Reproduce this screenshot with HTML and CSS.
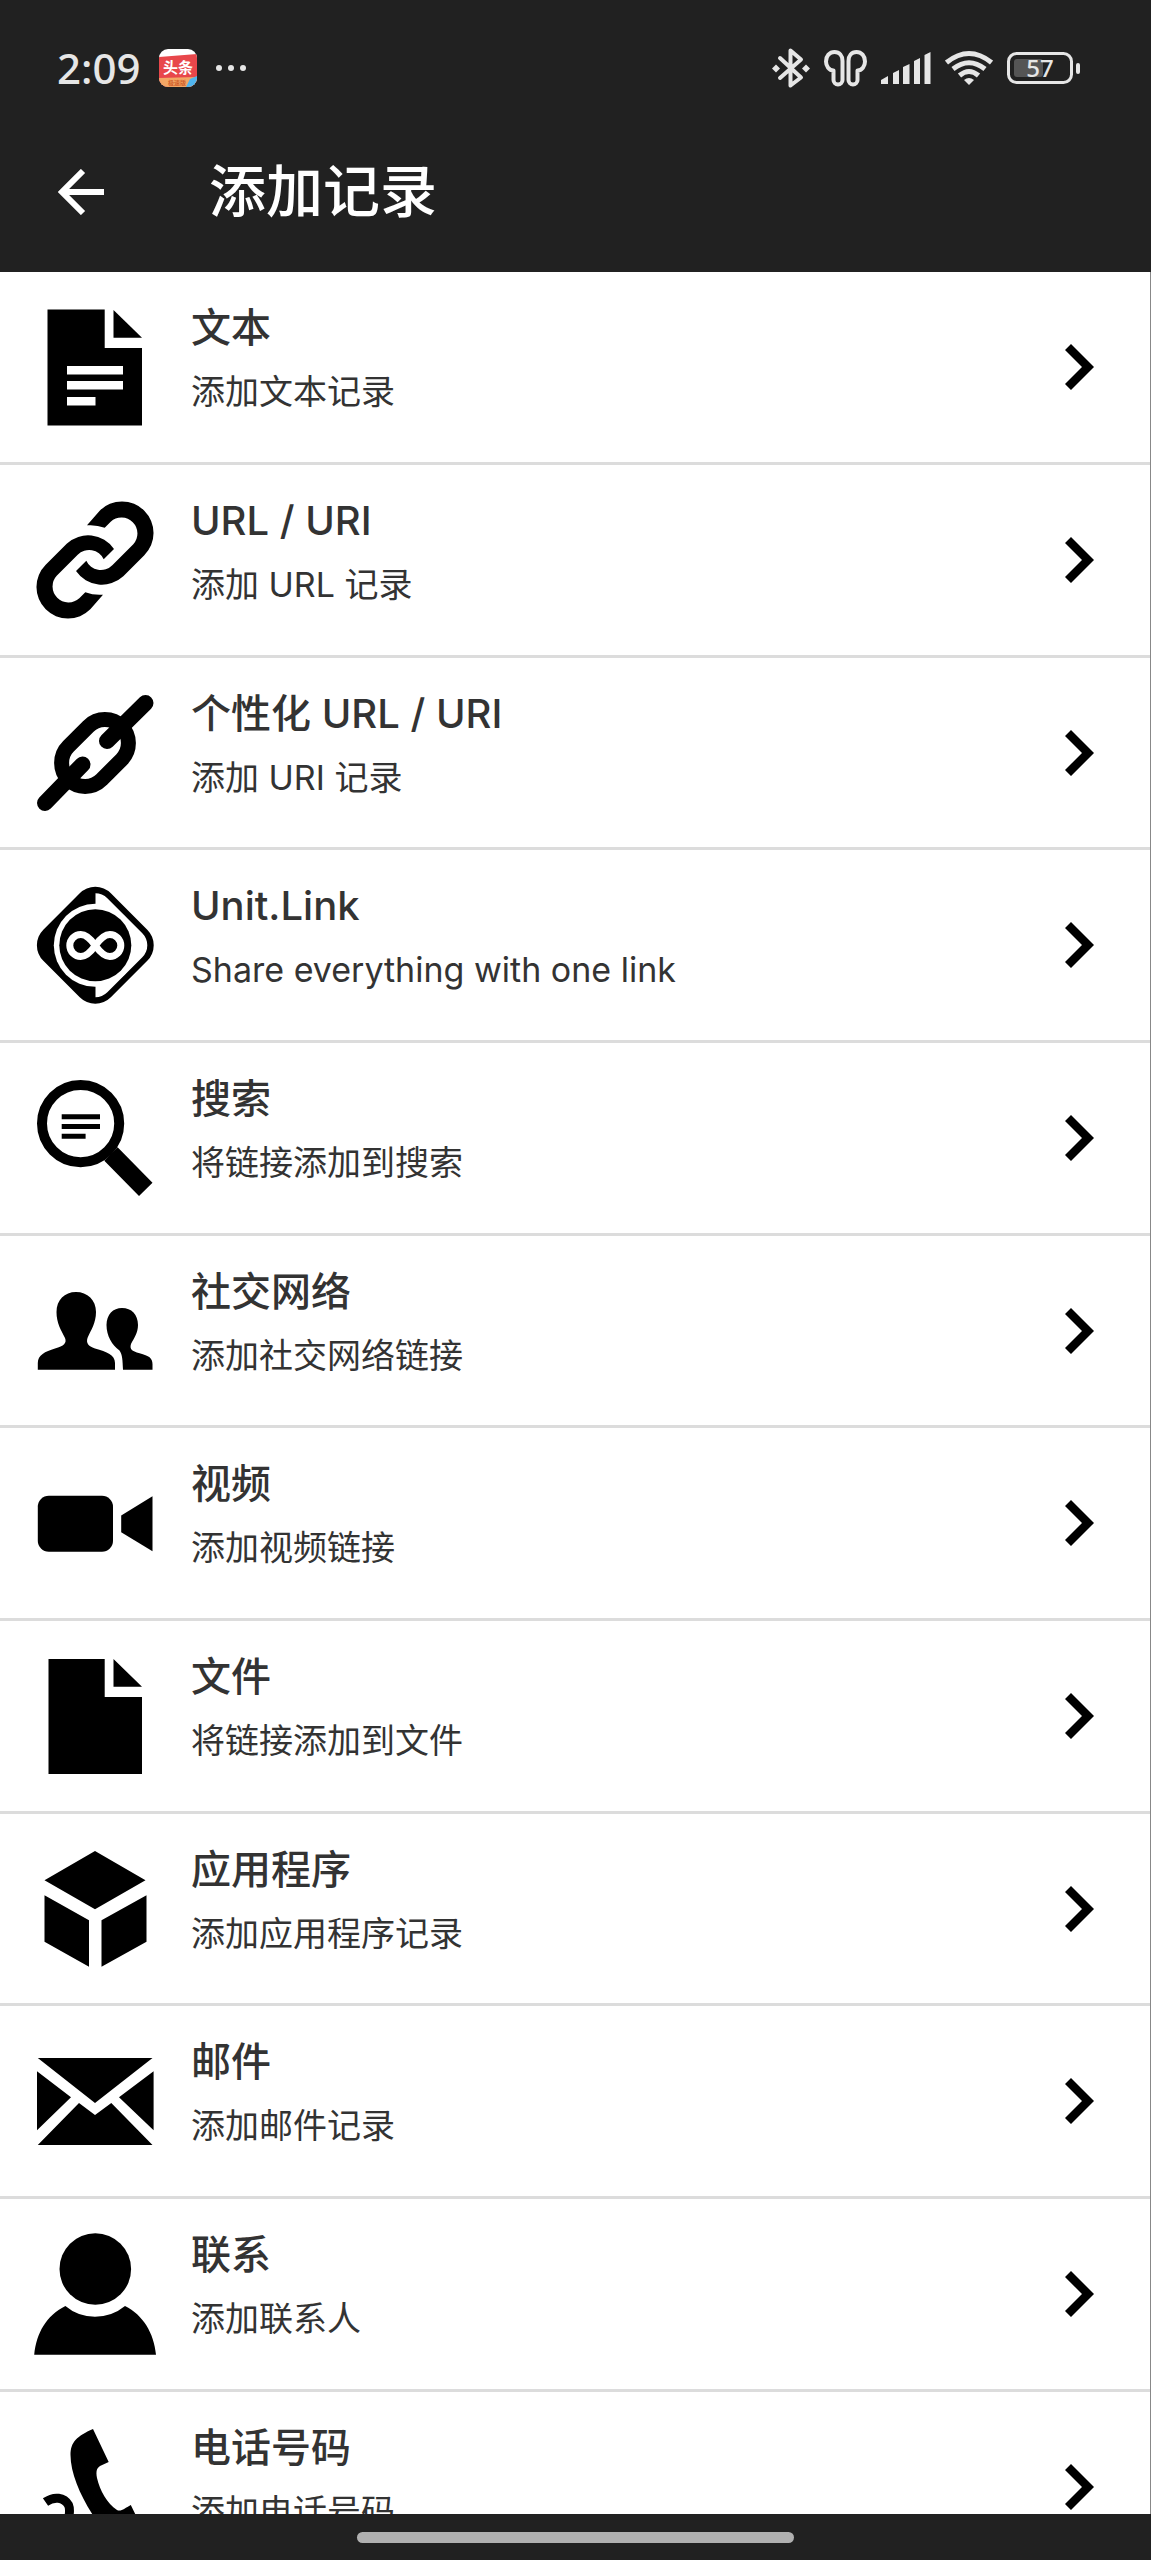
FILE: index.html
```html
<!DOCTYPE html>
<html lang="zh-CN">
<head>
<meta charset="utf-8">
<meta name="viewport" content="width=device-width, initial-scale=1">
<title>添加记录</title>
<link rel="stylesheet" href="styles.css">
</head>
<body>
<div class="screen">
  <header class="top">
    <div class="status">
      <div class="status-left">
        <span class="clock">2:09</span>
        <svg class="app-badge" width="38" height="38" viewBox="0 0 38 38" role="img" aria-label="头条">
          <clipPath id="badge"><rect width="38" height="38" rx="9"/></clipPath>
          <g clip-path="url(#badge)">
            <rect width="38" height="38" fill="#fff"/>
            <path d="M0 8L38 5V38H0Z" fill="#e8474b"/>
            <path d="M0 29L38 28V38H0Z" fill="#f3a765"/>
            <path d="M31 30L38 27V38H27Z" fill="#4fb4ee"/>
            <text class="badge-name" x="19" y="24" text-anchor="middle">头条</text>
            <text class="badge-sub" x="18" y="36" text-anchor="middle">极速版</text>
          </g>
        </svg>
        <svg width="32" height="8" viewBox="0 0 32 8" fill="#e6e6e6" aria-hidden="true">
          <circle cx="4" cy="4" r="3"/><circle cx="16" cy="4" r="3"/><circle cx="28" cy="4" r="3"/>
        </svg>
      </div>
      <div class="status-right">
        <svg width="38" height="42" viewBox="0 0 38 42" aria-label="蓝牙" role="img">
          <path d="M8 11L29 30.500L18.500 38.500V3.500L29 12.500L8 31" fill="none" stroke="#e6e6e6" stroke-width="4" stroke-linejoin="round" stroke-linecap="round"/>
          <path d="M4 17.500L8 21.500L4 25.500L0 21.500ZM34 17.500L38 21.500L34 25.500L30 21.500Z" fill="#e6e6e6"/>
        </svg>
        <svg width="43" height="38" viewBox="0 0 43 38" aria-label="耳机" role="img">
          <g fill="none" stroke="#e6e6e6" stroke-width="4" stroke-linejoin="round">
            <path id="bud" d="M18.500 12V31A4.500 4.500 0 0 1 9.500 31V21.500C5 21.500 2 17 2 12.500C2 7 5.500 3 10.500 3S18.500 7 18.500 12Z"/>
            <path d="M24.500 12V31A4.500 4.500 0 0 0 33.500 31V21.500C38 21.500 41 17 41 12.500C41 7 37.500 3 32.500 3S24.500 7 24.500 12Z"/>
          </g>
        </svg>
        <svg width="50" height="34" viewBox="0 0 50 34" fill="#e6e6e6" aria-label="信号" role="img">
          <path d="M0 33V29L7 25V33ZM12 33V22L18 19V33ZM22 33V16L28.500 13V33ZM33 33V10L39 7V33ZM43.500 33V4L49.500 1V33Z"/>
        </svg>
        <svg width="48" height="36" viewBox="0 0 48 36" aria-label="无线网络" role="img">
          <g fill="none" stroke="#e6e6e6" stroke-width="5">
            <path d="M1.500 12.500Q24 -5.500 46.500 12.500"/>
            <path d="M8 19Q24 6.500 40 19"/>
            <path d="M14.500 25.500Q24 17.500 33.500 25.500"/>
          </g>
          <path d="M19 30Q24 26 29 30L24 35Z" fill="#e6e6e6"/>
        </svg>
        <svg width="74" height="34" viewBox="0 0 74 34" aria-label="电量 57%" role="img">
          <rect x="7" y="8" width="29" height="18" rx="3" fill="#555"/>
          <rect x="1.500" y="2.500" width="63" height="29" rx="8" fill="none" stroke="#e6e6e6" stroke-width="3"/>
          <rect x="69" y="12" width="4" height="11" rx="2" fill="#e6e6e6"/>
          <text class="battery-level" x="33" y="26" text-anchor="middle">57</text>
        </svg>
      </div>
    </div>
    <div class="appbar">
      <button class="back" type="button" aria-label="返回">
        <svg width="46" height="46" viewBox="0 0 46 46" fill="none" stroke="#fff" stroke-width="6" aria-hidden="true"><path d="M46 23H4M25 2L4 23L25 44"/></svg>
      </button>
      <h1 class="heading">添加记录</h1>
    </div>
  </header>

  <main class="content">
    <ul class="records">
      <li class="record"><a class="record-link" href="#text">
        <svg class="icon" viewBox="0 0 124 124" aria-hidden="true"><path fill-rule="evenodd" d="M14.500 4.500H71.700V43H109V120.500H14.500ZM34 61V69.500H90V61ZM34 76V84.500H90V76ZM34 92V100.500H62.500V92Z"/><path d="M80.500 5L109 32.700H80.500Z"/></svg>
        <span class="words"><span class="name">文本</span><span class="hint">添加文本记录</span></span>
        <svg class="chevron" viewBox="0 0 29 46" aria-hidden="true"><path d="M0 6L6 0L29 23L6 46L0 40L17 23Z"/></svg>
      </a></li>
      <li class="record"><a class="record-link" href="#url">
        <svg class="icon" viewBox="0 0 124 124" aria-hidden="true"><path id="half-link" d="M54 27.300L66.700 12.700A31.500 31.500 0 0 1 111.300 57.300L90.300 78.300A31.500 31.500 0 0 1 43 73L53.300 62.700A16 16 0 0 0 79.300 67.300L100.300 46.300A16 16 0 0 0 77.700 23.700L71.700 29.700Q63 26.500 54 27.300Z"/><use href="#half-link" transform="rotate(180 62 62)"/></svg>
        <span class="words"><span class="name">URL / URI</span><span class="hint">添加 URL 记录</span></span>
        <svg class="chevron" viewBox="0 0 29 46" aria-hidden="true"><path d="M0 6L6 0L29 23L6 46L0 40L17 23Z"/></svg>
      </a></li>
      <li class="record"><a class="record-link" href="#uri">
        <svg class="icon" viewBox="0 0 124 124" aria-hidden="true"><g fill="none" stroke="#000"><rect x="24.500" y="38.500" width="75" height="47" rx="23.500" stroke-width="15" transform="rotate(-45 62 62)"/><path d="M112.500 12L74 50M49.500 73.500L12 112" stroke-width="16" stroke-linecap="round"/></g></svg>
        <span class="words"><span class="name">个性化 URL / URI</span><span class="hint">添加 URI 记录</span></span>
        <svg class="chevron" viewBox="0 0 29 46" aria-hidden="true"><path d="M0 6L6 0L29 23L6 46L0 40L17 23Z"/></svg>
      </a></li>
      <li class="record"><a class="record-link" href="#unit-link">
        <svg class="icon" viewBox="0 0 124 124" aria-hidden="true">
          <clipPath id="right-half"><rect x="62.500" width="61.500" height="124"/></clipPath>
          <rect x="14.500" y="14.500" width="95.500" height="95.500" rx="22" transform="rotate(45 62.300 62.300)"/>
          <g clip-path="url(#right-half)"><rect x="20.500" y="20.500" width="83.500" height="83.500" rx="17" fill="#fff" transform="rotate(45 62.300 62.300)"/></g>
          <circle cx="62.300" cy="62.300" r="41.500" fill="#fff"/>
          <circle cx="62.300" cy="62.300" r="36"/>
          <path d="M62.300 62.500C57 55 53 51.500 47.800 51.500A11 11 0 0 0 47.800 73.500C53 73.500 57 70 62.300 62.500C67.600 55 71.600 51.500 76.800 51.500A11 11 0 0 1 76.800 73.500C71.600 73.500 67.600 70 62.300 62.500Z" fill="none" stroke="#fff" stroke-width="7"/>
        </svg>
        <span class="words"><span class="name">Unit.Link</span><span class="hint">Share everything with one link</span></span>
        <svg class="chevron" viewBox="0 0 29 46" aria-hidden="true"><path d="M0 6L6 0L29 23L6 46L0 40L17 23Z"/></svg>
      </a></li>
      <li class="record"><a class="record-link" href="#search">
        <svg class="icon" viewBox="0 0 124 124" aria-hidden="true"><circle cx="47.600" cy="47.600" r="38.600" fill="none" stroke="#000" stroke-width="10"/><path d="M71.300 84.700L84.600 71.300L119.500 106.700L106 120ZM28.700 38.300H67V43.300H28.700ZM28.700 48H67V53H28.700ZM28.700 57.700H52.600V62.700H28.700Z"/></svg>
        <span class="words"><span class="name">搜索</span><span class="hint">将链接添加到搜索</span></span>
        <svg class="chevron" viewBox="0 0 29 46" aria-hidden="true"><path d="M0 6L6 0L29 23L6 46L0 40L17 23Z"/></svg>
      </a></li>
      <li class="record"><a class="record-link" href="#social">
        <svg class="icon" viewBox="0 0 124 124" aria-hidden="true"><path d="M43 23C54.500 23 63 31 63 43C63 54 58 61 54.500 69C53 74 55 77 62 79.500C74 83 82 86 82 94V100.700H4.800V94C4.800 86 12 82.500 22 79.500C31 77 34 74 32 69C28 61 23.500 54 23.500 43C23.500 31 31.500 23 43 23Z"/><path d="M89 39C98.500 39 105 45.500 105 56C105 64 101 69 98 75C96.500 80 98.500 82 106.600 84.300C116 87 119.500 89 119.500 95V100.700H90C89.500 91 89.500 86 86.500 81.500C79 76 73.500 67 73.500 56C73.500 45.500 80 39 89 39Z"/></svg>
        <span class="words"><span class="name">社交网络</span><span class="hint">添加社交网络链接</span></span>
        <svg class="chevron" viewBox="0 0 29 46" aria-hidden="true"><path d="M0 6L6 0L29 23L6 46L0 40L17 23Z"/></svg>
      </a></li>
      <li class="record"><a class="record-link" href="#video">
        <svg class="icon" viewBox="0 0 124 124" aria-hidden="true"><rect x="4.800" y="34.700" width="75.200" height="56" rx="11"/><path d="M88.200 54.500L119.500 35.300V90.300L88.200 71.300Z"/></svg>
        <span class="words"><span class="name">视频</span><span class="hint">添加视频链接</span></span>
        <svg class="chevron" viewBox="0 0 29 46" aria-hidden="true"><path d="M0 6L6 0L29 23L6 46L0 40L17 23Z"/></svg>
      </a></li>
      <li class="record"><a class="record-link" href="#file">
        <svg class="icon" viewBox="0 0 124 124" aria-hidden="true"><path d="M15.500 5H71.700V43H109V120H15.500ZM80.500 5L109 32.700H80.500Z"/></svg>
        <span class="words"><span class="name">文件</span><span class="hint">将链接添加到文件</span></span>
        <svg class="chevron" viewBox="0 0 29 46" aria-hidden="true"><path d="M0 6L6 0L29 23L6 46L0 40L17 23Z"/></svg>
      </a></li>
      <li class="record"><a class="record-link" href="#app">
        <svg class="icon" viewBox="0 0 124 124" aria-hidden="true"><path d="M62 4L112.500 33.300L62 62.300L11.500 33.300ZM11.500 48.300L56 73.300V119.700L11.500 94.700ZM113.500 48.300L68.500 73.300V119.700L113.500 94.700Z"/></svg>
        <span class="words"><span class="name">应用程序</span><span class="hint">添加应用程序记录</span></span>
        <svg class="chevron" viewBox="0 0 29 46" aria-hidden="true"><path d="M0 6L6 0L29 23L6 46L0 40L17 23Z"/></svg>
      </a></li>
      <li class="record"><a class="record-link" href="#mail">
        <svg class="icon" viewBox="0 0 124 124" aria-hidden="true"><path d="M4.800 19H119.500L62 64ZM4 32.300L38 58.300L4 91.300ZM120.600 32.300L86 58.300L120.600 91.300ZM4.800 106L46 64L62 76L78.300 64L119.500 106Z"/></svg>
        <span class="words"><span class="name">邮件</span><span class="hint">添加邮件记录</span></span>
        <svg class="chevron" viewBox="0 0 29 46" aria-hidden="true"><path d="M0 6L6 0L29 23L6 46L0 40L17 23Z"/></svg>
      </a></li>
      <li class="record"><a class="record-link" href="#contact">
        <svg class="icon" viewBox="0 0 124 124" aria-hidden="true"><circle cx="62.300" cy="37" r="35.800"/><path d="M1.200 122.700C3.500 101 13 84 32.400 74Q45 84.700 62 84.700T92 74C110 83 121 101 123 122.700Z"/></svg>
        <span class="words"><span class="name">联系</span><span class="hint">添加联系人</span></span>
        <svg class="chevron" viewBox="0 0 29 46" aria-hidden="true"><path d="M0 6L6 0L29 23L6 46L0 40L17 23Z"/></svg>
      </a></li>
      <li class="record"><a class="record-link" href="#phone">
        <svg class="icon" viewBox="0 0 124 124" aria-hidden="true"><path d="M60 4L75.700 37L67 41C63 43.500 63 48 64 53C67 66 74 78 84 85C88 87 92 83 97.800 80L114 113C98 124 80 118 66 99C50 77 37.500 50 37.500 30C37.500 17 44 11 60 4Z"/><path d="M12.500 77C21 71 31 72 35.500 80C38 86 36 94 32 104" fill="none" stroke="#000" stroke-width="9"/></svg>
        <span class="words"><span class="name">电话号码</span><span class="hint">添加电话号码</span></span>
        <svg class="chevron" viewBox="0 0 29 46" aria-hidden="true"><path d="M0 6L6 0L29 23L6 46L0 40L17 23Z"/></svg>
      </a></li>
    </ul>
  </main>

  <footer class="gesture-bar"><div class="gesture-handle"></div></footer>
</div>
</body>
</html>
```
FILE: styles.css
```css
* {
  box-sizing: border-box;
}

body {
  margin: 0;
  background: #fff;
  color: #333;
  font-family: Inter, "Noto Sans CJK SC", sans-serif;
}

svg {
  display: block;
  flex: none;
}

.screen {
  display: flex;
  flex-direction: column;
  height: 100vh;
}

.top {
  flex: none;
  background: #212121;
  color: #fff;
}

/* Status bar */
.status {
  display: flex;
  justify-content: space-between;
  align-items: center;
  height: 112px;
  padding: 24px 70px 0 57px;
}

.status-left {
  display: flex;
  align-items: center;
}

.status-right {
  display: flex;
  align-items: center;
  gap: 14px;
}

.clock {
  color: #e6e6e6;
  font: 500 42px/48px "Noto Sans", sans-serif;
}

.app-badge {
  margin: 0 18px;
}

.badge-name {
  fill: #fff;
  font: 700 15px "Noto Sans CJK SC", sans-serif;
}

.badge-sub {
  fill: #d0602c;
  font: 700 6px "Noto Sans CJK SC", sans-serif;
}

.battery-level {
  fill: #e6e6e6;
  font: 500 24px "Noto Sans", sans-serif;
}

/* App bar */
.appbar {
  display: flex;
  align-items: center;
  gap: 105px;
  height: 160px;
  padding: 0 58px;
}

.back {
  padding: 0;
  border: 0;
  background: none;
  cursor: pointer;
}

.heading {
  margin: 0;
  font-size: 57px;
  font-weight: 500;
  line-height: 80px;
}

/* Record list */
.content {
  flex: 1;
  min-height: 0;
  overflow-y: auto;
  scrollbar-width: none;
  border-right: 1px solid #888;
}

.records {
  margin: 0;
  padding: 0;
  list-style: none;
}

.record {
  height: 193px;
  border-bottom: 3px solid #dcdcdc;
}

.record:nth-child(3n) {
  height: 192px;
}

.record-link {
  display: flex;
  align-items: center;
  height: 100%;
  padding: 0 56px 0 33px;
  color: inherit;
  text-decoration: none;
}

.icon {
  width: 124px;
  height: 124px;
}

.words {
  display: flex;
  flex: 1;
  flex-direction: column;
  align-self: flex-start;
  min-width: 0;
  padding: 24px 34px 0;
}

.name {
  font-size: 40px;
  font-weight: 500;
  line-height: 64px;
}

.hint {
  font-size: 34px;
  line-height: 64px;
}

.chevron {
  width: 29px;
  height: 46px;
}

/* Gesture bar */
.gesture-bar {
  display: flex;
  flex: none;
  justify-content: center;
  height: 46px;
  padding-top: 18px;
  background: #212121;
}

.gesture-handle {
  width: 38%;
  height: 11px;
  border-radius: 6px;
  background: #b0b0b0;
}
```
